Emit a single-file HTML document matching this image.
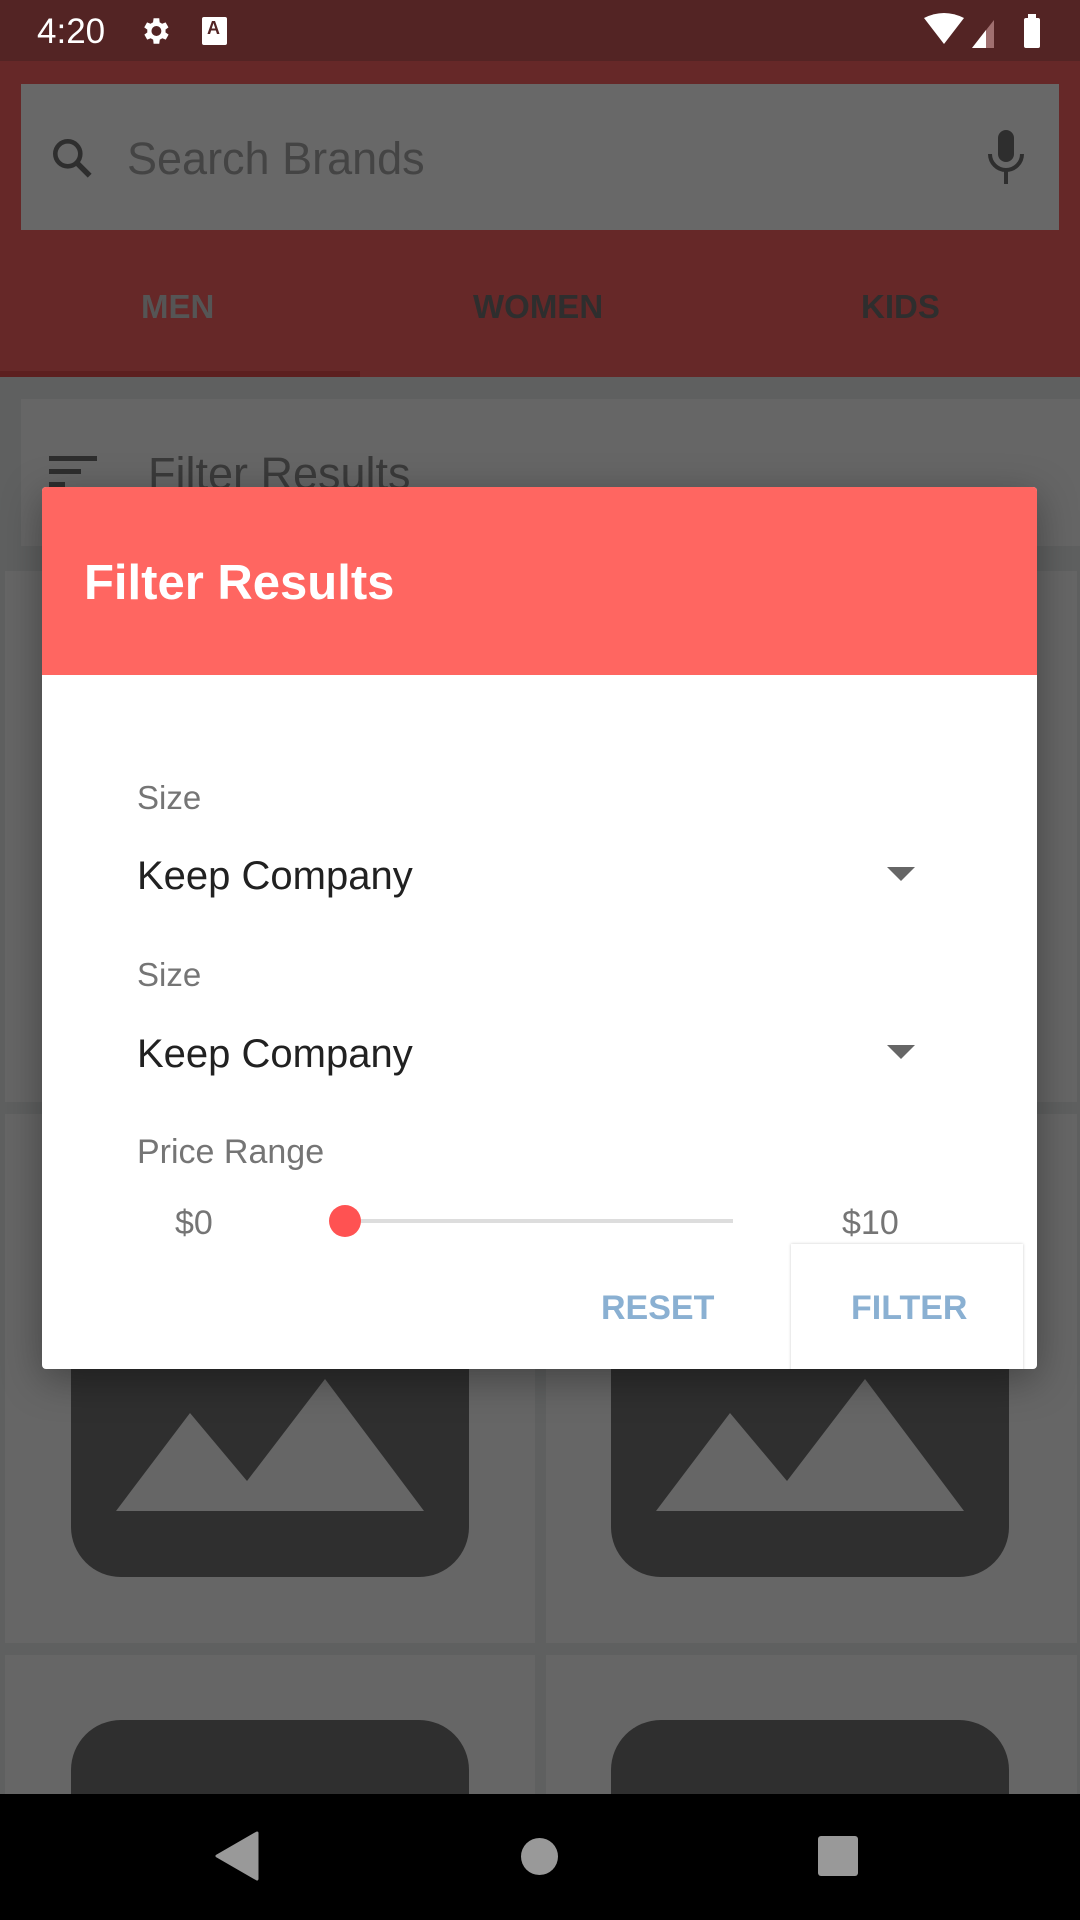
<!DOCTYPE html>
<html><head><meta charset="utf-8"><style>
*{margin:0;padding:0;box-sizing:border-box}
body{width:1080px;height:1920px;overflow:hidden;background:#5f6060;font-family:"Liberation Sans",sans-serif;position:relative}
.a{position:absolute}
.t{position:absolute;white-space:nowrap;line-height:1}
.cell{position:absolute;background:#666}
.img{position:absolute;background:#2f2f2f;border-radius:50px}
</style></head><body>
<div class="a" style="left:0;top:0;width:1080px;height:61px;background:#532424"></div>
<div class="t" style="left:37px;top:14px;font-size:35px;color:#fff">4:20</div>
<svg class="a" style="left:138px;top:14px" width="34" height="34" viewBox="0 0 24 24"><path fill="#fff" d="M19.4 13a7.5 7.5 0 000-2l2.1-1.6-2-3.5-2.5 1a7 7 0 00-1.7-1L15 3h-4l-.4 2.9a7 7 0 00-1.7 1l-2.5-1-2 3.5L6.6 11a7.5 7.5 0 000 2l-2.1 1.6 2 3.5 2.5-1a7 7 0 001.7 1L11 21h4l.4-2.9a7 7 0 001.7-1l2.5 1 2-3.5zM13 15.5a3.5 3.5 0 110-7 3.5 3.5 0 010 7z"/></svg>
<div class="a" style="left:202px;top:17px;width:25px;height:28px;background:#fff;border-radius:2px"></div>
<div class="t" style="left:207px;top:19px;font-size:18px;font-weight:bold;color:#532424">A</div>
<svg class="a" style="left:922px;top:12px" width="120" height="38" viewBox="0 0 120 38"><path d="M2 6 Q22 -4 42 6 L22 32Z" fill="#fff"/><path d="M50 36 L72 8 L72 36Z" fill="#a07070"/><path d="M50 36 L64 18 L64 36Z" fill="#fff"/><rect x="102" y="6" width="16" height="30" rx="2" fill="#fff"/><rect x="106" y="2" width="8" height="5" fill="#fff"/></svg>
<div class="a" style="left:0;top:61px;width:1080px;height:316px;background:#662828"></div>
<div class="a" style="left:0;top:371px;width:360px;height:6px;background:#5c1f1f"></div>
<div class="a" style="left:21px;top:84px;width:1038px;height:146px;background:#686868"></div>
<svg class="a" style="left:48px;top:134px" width="50" height="50" viewBox="0 0 24 24"><circle cx="9.5" cy="9.5" r="6" fill="none" stroke="#2e2e2e" stroke-width="2.2"/><path d="M14 14l6 6" stroke="#2e2e2e" stroke-width="2.6"/></svg>
<div class="t" style="left:127px;top:136px;font-size:45px;color:#444">Search Brands</div>
<svg class="a" style="left:986px;top:130px" width="40" height="56" viewBox="0 0 20 28"><rect x="6" y="0" width="8" height="16" rx="4" fill="#2e2e2e"/><path d="M2 12a8 8 0 0016 0M10 20v7" fill="none" stroke="#2e2e2e" stroke-width="2"/></svg>
<div class="t" style="left:141px;top:290px;font-size:33px;font-weight:bold;color:#555">MEN</div>
<div class="t" style="left:473px;top:290px;font-size:33px;font-weight:bold;color:#2e2e2e">WOMEN</div>
<div class="t" style="left:861px;top:290px;font-size:33px;font-weight:bold;color:#2e2e2e">KIDS</div>
<div class="a" style="left:21px;top:399px;width:1059px;height:147px;background:#666"></div>
<div class="a" style="left:49px;top:456px;width:48px;height:5px;background:#2e2e2e"></div>
<div class="a" style="left:49px;top:469px;width:32px;height:5px;background:#2e2e2e"></div>
<div class="a" style="left:49px;top:482px;width:16px;height:5px;background:#2e2e2e"></div>
<div class="t" style="left:148px;top:451px;font-size:45px;color:#3a3a3a">Filter Results</div>
<div class="cell" style="left:5px;top:571px;width:530px;height:531px"></div>
<div class="cell" style="left:546px;top:571px;width:531px;height:531px"></div>
<div class="cell" style="left:5px;top:1114px;width:530px;height:529px"></div>
<div class="cell" style="left:546px;top:1114px;width:531px;height:529px"></div>
<div class="cell" style="left:5px;top:1655px;width:530px;height:200px"></div>
<div class="cell" style="left:546px;top:1655px;width:531px;height:200px"></div>
<div class="img" style="left:71px;top:1179px;width:398px;height:398px"></div>
<div class="img" style="left:611px;top:1179px;width:398px;height:398px"></div>
<svg class="a" style="left:71px;top:1179px" width="398" height="398"><path d="M45 332 L119 234 L176 302 L254 200 L353 332Z" fill="#666"/></svg>
<svg class="a" style="left:611px;top:1179px" width="398" height="398"><path d="M45 332 L119 234 L176 302 L254 200 L353 332Z" fill="#666"/></svg>
<div class="img" style="left:71px;top:1720px;width:398px;height:200px"></div>
<div class="img" style="left:611px;top:1720px;width:398px;height:200px"></div>
<div class="a" style="left:0;top:1794px;width:1080px;height:126px;background:#000"></div>
<svg class="a" style="left:215px;top:1831px" width="44" height="50"><path d="M42 2 L2 25 L42 48Z" fill="#999" stroke="#999" stroke-width="3" stroke-linejoin="round"/></svg>
<div class="a" style="left:521px;top:1838px;width:37px;height:37px;border-radius:50%;background:#999"></div>
<div class="a" style="left:818px;top:1836px;width:40px;height:40px;border-radius:3px;background:#999"></div>
<div class="a" style="left:42px;top:487px;width:995px;height:882px;background:#fff;border-radius:4px;box-shadow:0 10px 40px rgba(0,0,0,.35);overflow:hidden">
 <div class="a" style="left:0;top:0;width:995px;height:188px;background:#ff6661"></div>
 <div class="t" style="left:42px;top:72px;font-size:49px;font-weight:bold;color:#fff">Filter Results</div>
 <div class="t" style="left:95px;top:294px;font-size:33px;color:#757575">Size</div>
 <div class="t" style="left:95px;top:369px;font-size:40px;color:#212121">Keep Company</div>
 <svg class="a" style="left:845px;top:380px" width="28" height="14"><path d="M0 0H28L14 14Z" fill="#666"/></svg>
 <div class="t" style="left:95px;top:471px;font-size:33px;color:#757575">Size</div>
 <div class="t" style="left:95px;top:547px;font-size:40px;color:#212121">Keep Company</div>
 <svg class="a" style="left:845px;top:558px" width="28" height="14"><path d="M0 0H28L14 14Z" fill="#666"/></svg>
 <div class="t" style="left:95px;top:648px;font-size:34px;color:#757575">Price Range</div>
 <div class="t" style="left:133px;top:719px;font-size:34px;color:#757575">$0</div>
 <div class="a" style="left:303px;top:732px;width:388px;height:4px;background:#ddd"></div>
 <div class="a" style="left:287px;top:718px;width:32px;height:32px;border-radius:50%;background:#ff5252"></div>
 <div class="t" style="left:800px;top:719px;font-size:34px;color:#757575">$10</div>
 <div class="a" style="left:749px;top:757px;width:232px;height:130px;background:#fff;box-shadow:0 0 3px rgba(0,0,0,.2)"></div>
 <div class="t" style="left:559px;top:804px;font-size:34px;font-weight:bold;color:#8ab0d2">RESET</div>
 <div class="t" style="left:809px;top:804px;font-size:34px;font-weight:bold;color:#8ab0d2">FILTER</div>
</div>
</body></html>
